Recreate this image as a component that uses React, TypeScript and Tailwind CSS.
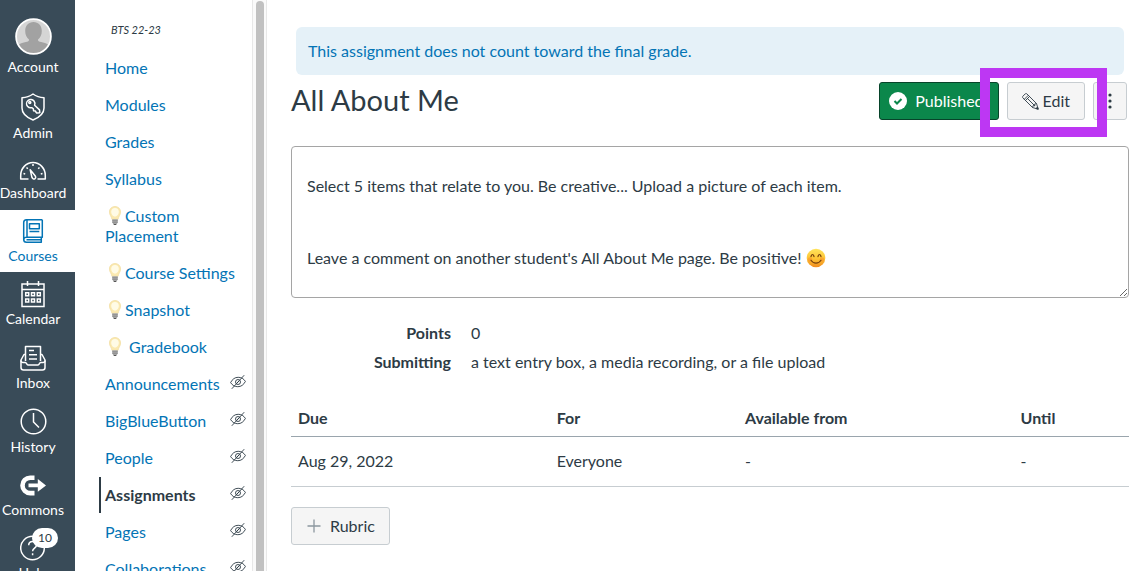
import type {ReactNode} from "react";

function AvatarIcon() {
  return (
    <svg width="37" height="37" viewBox="0 0 37 37" aria-hidden="true">
      <defs>
        <clipPath id="avatar">
          <circle cx="18.5" cy="18.5" r="17" />
        </clipPath>
      </defs>
      <circle cx="18.5" cy="18.5" r="17" fill="#d5d5d5" />
      <g clipPath="url(#avatar)" fill="#a2a2a2">
        <path d="M18.500 4c5 0 8.300 3.600 8.300 9 0 4-1.500 6.800-3.800 8.400 0 1.500.5 2 2 2.400 6 1.200 9.500 2.700 11 6.200v8H1v-8c1.500-3.500 5-5 11-6.200 1.500-.4 2-.9 2-2.400-2.300-1.600-3.800-4.400-3.800-8.400 0-5.400 3.300-9 8.300-9z" />
      </g>
      <circle cx="18.5" cy="18.5" r="17.4" fill="none" stroke="#fff" strokeWidth="1.8" />
    </svg>
  );
}

function AdminIcon() {
  return (
    <svg width="26" height="28" viewBox="0 0 26 28" fill="none" stroke="currentColor" strokeWidth="1.5" strokeLinejoin="round" aria-hidden="true">
      <path d="M13 1C10 3.300 6 4.600 2 4.700V15c0 5.500 4.800 9.500 11 12 6.200-2.500 11-6.500 11-12V4.700C20 4.600 16 3.300 13 1z" />
      <path d="M8 7.500c2-1.700 4.600-1.200 6 .5 1 1.300 1.200 2.900.6 4.300l4.900 4.600.3 2.800-3.300.2-1.200-1.900-1.700-.2-.3-2-1.300-1.100c-1.600.4-3.400-.1-4.500-1.400-1.400-1.800-1.200-4.400.5-5.800z" />
      <circle cx="9.8" cy="9.6" r="1" />
    </svg>
  );
}

function DashboardIcon() {
  return (
    <svg width="28" height="20" viewBox="0 0 28 20" fill="none" stroke="currentColor" strokeWidth="1.5" strokeLinejoin="round" aria-hidden="true">
      <path d="M9.500 18H1.700v-3.500C1.700 7.500 7 1.500 14 1.500s12.300 6 12.300 13V18h-7.800" />
      <path d="M11.200 8.800l4.900 5.900c.9 1.200.7 2.500-.3 3.100-1 .6-2.300.1-2.800-1.200z" />
      <path d="M14 3v2M20.500 6.500l-1.300 1.200M7.500 6.500l1.300 1.200M4.500 12.500l1.700.4M23.500 12.500l-1.700.4" />
    </svg>
  );
}

function CoursesIcon() {
  return (
    <svg width="22" height="26" viewBox="0 0 22 26" fill="none" stroke="currentColor" strokeWidth="1.5" strokeLinejoin="round" aria-hidden="true">
      <path d="M20.300 1.700H4.500C2.700 1.700 1.700 2.900 1.700 4.500v17c0 1.700 1.200 2.800 2.800 2.800h14.800v-5" />
      <path d="M20.300 1.700v17.600H4.500c-1.600 0-2.800.7-2.800 2.200M5 1.700v17.600M4.500 21.800h14.800" />
      <path d="M7.500 5.700h9.800v5H7.500zM7.500 13.500h9.800" />
    </svg>
  );
}

function CalendarIcon() {
  return (
    <svg width="24" height="27" viewBox="0 0 24 27" fill="none" stroke="currentColor" strokeWidth="1.5" aria-hidden="true">
      <path d="M1 3h22v22.500H1zM1 8.500h22M6.500 0v5M17.500 0v5" />
      <path d="M4.700 11.700h3v3h-3zM10.500 11.700h3v3h-3zM16.300 11.700h3v3h-3zM4.700 18h3v3h-3zM10.500 18h3v3h-3zM16.300 18h3v3h-3z" />
    </svg>
  );
}

function InboxIcon() {
  return (
    <svg width="26" height="26" viewBox="0 0 26 26" fill="none" stroke="currentColor" strokeWidth="1.5" strokeLinejoin="round" aria-hidden="true">
      <path d="M5.500 16V1.500h15V16" />
      <path d="M5.500 9.500H4L1 15v7.500C1 24 2 25 3.500 25h19c1.500 0 2.500-1 2.500-2.500V15l-3-5.500h-1.500" />
      <path d="M1 15.500c0 1.300.7 2 2 2h2.500c1 0 1.200 2.500 2.500 2.500h10c1.300 0 1.500-2.500 2.500-2.500H23c1.300 0 2-.7 2-2" />
      <path d="M9 5.500h5M9 9.700h8M9 14h8" />
    </svg>
  );
}

function HistoryIcon() {
  return (
    <svg width="27" height="27" viewBox="0 0 27 27" fill="none" stroke="currentColor" strokeWidth="1.5" aria-hidden="true">
      <circle cx="13.5" cy="13.5" r="12.3" />
      <path d="M13.500 5v9l5.500 5.500" />
    </svg>
  );
}

function CommonsIcon() {
  return (
    <svg width="26" height="21" viewBox="0 0 26 21" fill="none" aria-hidden="true">
      <path d="M14.500 2.700h-4.300a7.700 7.700 0 0 0 0 15.400h4.300" stroke="currentColor" strokeWidth="4.6" />
      <path d="M8.500 8.500h9.300V4l8.200 6.400-8.200 6.400v-4.500H8.500z" fill="currentColor" />
    </svg>
  );
}

function HelpIcon() {
  return (
    <svg width="26" height="26" viewBox="0 0 26 26" fill="none" stroke="currentColor" strokeWidth="1.5" aria-hidden="true">
      <circle cx="12.5" cy="13" r="11.8" />
      <path d="M8.700 10.300c0-2.300 1.700-3.800 3.900-3.800s3.900 1.400 3.900 3.500c0 3.100-3.900 3.200-3.900 6.300M12.600 18.300v2" />
    </svg>
  );
}

function BulbIcon() {
  return (
    <svg className="inline-block ml-1 mr-1 -mt-1" width="12" height="20" viewBox="0 0 12 20" aria-hidden="true">
      <path d="M6 .5c3.300 0 5.600 2.400 5.600 5.500 0 2.900-2 4.200-2.500 7.300H2.900C2.400 10.200.4 8.900.4 6 .4 2.900 2.700.5 6 .5z" fill="#fbe9b0" stroke="#f0dca0" strokeWidth=".7" />
      <path d="M6 2c2.300 0 3.800 1.500 3.800 3.700S8.300 10.500 6 10.500 2.200 8 2.200 5.700 3.700 2 6 2z" fill="#fffbe6" />
      <path d="M3.200 13.300h5.600v3L7.600 18.500H4.400L3.200 16.300z" fill="#a5a5a5" />
      <path d="M3.200 14.700h5.600M3.400 16.400h5.200" stroke="#858585" strokeWidth=".6" />
      <path d="M4.800 18h2.400v1H4.800z" fill="#555" />
    </svg>
  );
}

function HiddenIcon() {
  return (
    <svg className="-mt-1 shrink-0 text-[#2d3b45]" width="16" height="16" viewBox="0 0 16 16" fill="none" stroke="currentColor" strokeWidth=".9" aria-label="Disabled. Not visible to students" role="img">
      <path d="M.6 8.600C2.400 5 5 3.300 8.200 3.300c3 0 5.400 1.300 7.200 4.100-1.800 3.600-4.400 5.300-7.600 5.300-3 0-5.400-1.300-7.200-4.100z" />
      <circle cx="8" cy="8" r="2.5" />
      <path d="M14.200 1.200L1.800 14.800M7 9l2-2" />
    </svg>
  );
}

function SmileIcon() {
  return (
    <svg className="inline-block -mt-1" width="20" height="20" viewBox="0 0 20 20" fill="none" role="img" aria-label="smiling face">
      <defs>
        <linearGradient id="smile" x1="0" y1="0" x2="0" y2="1">
          <stop offset="0" stopColor="#ffe45c" />
          <stop offset=".55" stopColor="#fdc334" />
          <stop offset="1" stopColor="#f08a1d" />
        </linearGradient>
      </defs>
      <circle cx="10" cy="10" r="9.3" fill="url(#smile)" />
      <circle cx="4" cy="11.5" r="2.3" fill="#f9842b" opacity=".45" />
      <circle cx="16" cy="11.5" r="2.3" fill="#f9842b" opacity=".45" />
      <path d="M5 8.700c.3-1.500.8-2.200 1.500-2.200s1.200.7 1.500 2.200M12 8.700c.3-1.500.8-2.200 1.500-2.200s1.200.7 1.500 2.200M5 12.300c1.200 1.900 3 2.800 5 2.800s3.800-.9 5-2.800" stroke="#76410c" strokeWidth="1.2" strokeLinecap="round" />
    </svg>
  );
}

function PencilIcon() {
  return (
    <svg width="17" height="17" viewBox="0 0 17 17" fill="none" stroke="currentColor" strokeWidth=".9" strokeLinejoin="round" aria-hidden="true">
      <path d="M.9 3.200L3.200.9c.5-.5 1.200-.5 1.700 0l9.600 9.600 1.700 5.700-5.700-1.700L.9 4.900c-.5-.5-.5-1.200 0-1.700z" />
      <path d="M2.300 6.300l4-4M3.500 7.500l4-4M5.300 5.300l7.500 7.500M10.500 14.500l.5-1.800 1.800.1-.1-1.800 1.800-.5" />
      <path d="M15.500 14l.7 2.200-2.200-.7z" fill="currentColor" />
    </svg>
  );
}

type RailItem = {
  label: string;
  icon: ReactNode;
  iconHeight: string;
  badge?: string;
};

const railItems: RailItem[] = [
  {label: "Account", icon: <AvatarIcon />, iconHeight: "h-[39px] pb-[2px]"},
  {label: "Admin", icon: <AdminIcon />, iconHeight: "h-[31px] pb-[2px]"},
  {label: "Dashboard", icon: <DashboardIcon />, iconHeight: "h-[25px]"},
  {label: "Courses", icon: <CoursesIcon />, iconHeight: "h-7 pb-[2px]"},
  {label: "Calendar", icon: <CalendarIcon />, iconHeight: "h-7 pb-[2px]"},
  {label: "Inbox", icon: <InboxIcon />, iconHeight: "h-[29px] pb-[2px]"},
  {label: "History", icon: <HistoryIcon />, iconHeight: "h-[29px] pb-[2px]"},
  {label: "Commons", icon: <CommonsIcon />, iconHeight: "h-7 pb-[2px]"},
  {label: "Help", icon: <HelpIcon />, iconHeight: "h-7 pb-[2px]", badge: "10"},
];

type CourseLink = {
  label: string;
  bulb?: boolean;
  hidden?: boolean;
};

const courseLinks: CourseLink[] = [
  {label: "Home"},
  {label: "Modules"},
  {label: "Grades"},
  {label: "Syllabus"},
  {label: "Custom Placement", bulb: true},
  {label: "Course Settings", bulb: true},
  {label: "Snapshot", bulb: true},
  {label: " Gradebook", bulb: true},
  {label: "Announcements", hidden: true},
  {label: "BigBlueButton", hidden: true},
  {label: "People", hidden: true},
  {label: "Assignments", hidden: true},
  {label: "Pages", hidden: true},
  {label: "Collaborations", hidden: true},
];

function GlobalNav() {
  return (
    <nav aria-label="Global" className="flex w-[75px] shrink-0 flex-col gap-px bg-[#394b58] pt-[10px] text-white">
      {railItems.map((item) => (
        <a
          key={item.label}
          href="#"
          className={
            item.label === "Courses"
              ? "flex shrink-0 flex-col items-center bg-white pt-2 pb-[6px] pr-[9px] text-[#0374b5]"
              : "flex shrink-0 flex-col items-center pt-2 pb-[6px] pr-[9px]"
          }
        >
          <span className={`relative flex items-center justify-center ${item.iconHeight}`}>
            {item.icon}
            {item.badge && (
              <span className="absolute -top-[7px] left-3 rounded-full bg-white px-[6px] text-xs leading-5 text-[#2d3b45]">
                {item.badge}
              </span>
            )}
          </span>
          <span className="text-sm leading-5">{item.label}</span>
        </a>
      ))}
    </nav>
  );
}

function CourseNav() {
  return (
    <nav aria-label="Courses" className="w-[177px] shrink-0 overflow-hidden pr-[6px] pl-6">
      <p className="pt-5 pl-3 text-[11px] leading-5 italic">BTS 22-23</p>
      <ul className="mt-[10px] flex flex-col gap-px">
        {courseLinks.map((link) => (
          <li key={link.label}>
            <a
              href="#"
              className={
                link.label === "Assignments"
                  ? "flex items-center justify-between border-l-2 border-[#2d3b45] py-2 pl-1 leading-5 font-bold"
                  : "flex items-center justify-between border-l-2 border-transparent py-2 pl-1 leading-5 text-[#0374b5]"
              }
            >
              <span className="whitespace-pre-wrap">
                {link.bulb && <BulbIcon />}
                {link.label}
              </span>
              {link.hidden && <HiddenIcon />}
            </a>
          </li>
        ))}
      </ul>
    </nav>
  );
}

function AssignmentHeader() {
  return (
    <header className="mt-[7px] flex items-start justify-between pr-[2px]">
      <h1 className="text-[29px] leading-9">All About Me</h1>
      <div className="flex gap-2">
        <button className="flex h-[38px] items-center gap-2 rounded-[3px] border border-[#07442a] bg-[#0b874b] pr-[14px] pl-[9px] text-white">
          <svg width="18" height="18" viewBox="0 0 18 18" aria-hidden="true">
            <circle cx="9" cy="9" r="9" fill="#fff" />
            <path d="M5.500 9l2.500 2.500 4.500-4.500" fill="none" stroke="#0b874b" strokeWidth="2" />
          </svg>
          Published
        </button>
        <div className="relative z-10">
          <button className="flex h-[38px] items-center gap-1 rounded-[3px] border border-[#c7cdd1] bg-[#f5f5f5] px-[14px]">
            <PencilIcon />
            Edit
          </button>
          <div className="pointer-events-none absolute -top-[14px] -right-[22px] -bottom-[17px] -left-[27px] border-10 border-[#bd37f3]" />
        </div>
        <button aria-label="Manage assignment" className="flex h-[38px] w-[34px] items-center justify-center rounded-[3px] border border-[#c7cdd1] bg-[#f5f5f5]">
          <svg width="4" height="16" viewBox="0 0 4 16" fill="currentColor" aria-hidden="true">
            <circle cx="2" cy="2" r="1.6" />
            <circle cx="2" cy="8" r="1.6" />
            <circle cx="2" cy="14" r="1.6" />
          </svg>
        </button>
      </div>
    </header>
  );
}

function DueTable() {
  return (
    <table className="mt-[26px] w-full text-left">
      <thead>
        <tr className="border-b border-[#9aa5ad]">
          <th className="px-[7px] py-[6px] font-bold">Due</th>
          <th className="px-[7px] py-[6px] font-bold">For</th>
          <th className="px-[7px] py-[6px] font-bold">Available from</th>
          <th className="px-[7px] py-[6px] font-bold">Until</th>
        </tr>
      </thead>
      <tbody>
        <tr className="border-b border-[#c7cdd1]">
          <td className="px-[7px] pt-3 pb-[13px]">Aug 29, 2022</td>
          <td className="px-[7px] pt-3 pb-[13px]">Everyone</td>
          <td className="px-[7px] pt-3 pb-[13px]">-</td>
          <td className="px-[7px] pt-3 pb-[13px]">-</td>
        </tr>
      </tbody>
    </table>
  );
}

export default function App() {
  return (
    <div className="flex h-screen overflow-hidden bg-white font-['Lato',sans-serif] text-base text-[#2d3b45]">
      <GlobalNav />
      <CourseNav />
      <div className="w-[15px] shrink-0 border-x border-[#e8e8e8] bg-[#fafafa] pt-px pr-[2px] pl-[3px]">
        <div className="h-full rounded-t-full bg-[#c1c1c1]" />
      </div>
      <main className="min-w-0 flex-1 pt-[27px] pr-[13px] pl-6">
        <div className="mx-[5px] rounded-md bg-[#e5f1f8] px-3 py-3 text-[#0374b5]">
          This assignment does not count toward the final grade.
        </div>
        <AssignmentHeader />
        <div className="mt-[26px] resize-y overflow-auto rounded-[4px] border border-[#a5a5a5] p-[15px]">
          <p className="my-3">Select 5 items that relate to you. Be creative... Upload a picture of each item.</p>
          <p className="my-3">&nbsp;</p>
          <p className="my-3">
            Leave a comment on another student's All About Me page. Be positive! <SmileIcon />
          </p>
        </div>
        <dl className="mt-[23px] grid grid-cols-[160px_1fr] gap-x-5 gap-y-[5px]">
          <dt className="text-right font-bold">Points</dt>
          <dd>0</dd>
          <dt className="text-right font-bold">Submitting</dt>
          <dd>a text entry box, a media recording, or a file upload</dd>
        </dl>
        <DueTable />
        <button className="mt-5 flex h-[38px] items-center gap-2 rounded-[3px] border border-[#c7cdd1] bg-[#f5f5f5] px-[14px]">
          <svg width="16" height="16" viewBox="0 0 16 16" stroke="#8b969e" strokeWidth="1.3" aria-hidden="true">
            <path d="M8 1.500v13M1.500 8h13" />
          </svg>
          Rubric
        </button>
      </main>
    </div>
  );
}
